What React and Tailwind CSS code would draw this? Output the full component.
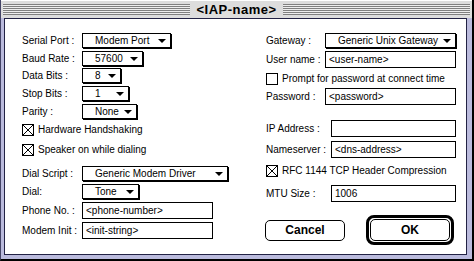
import React from 'react'

const stripes =
  'h-[11px] flex-1 bg-[repeating-linear-gradient(to_bottom,#808080_0px,#808080_1px,#eeeeee_1px,#eeeeee_2px)]'

function Arrow() {
  return (
    <svg width="8" height="4" viewBox="0 0 8 4" className="shrink-0">
      <polygon points="0,0 8,0 4,4" fill="#000" />
    </svg>
  )
}

function Popup({ w, text }) {
  return (
    <div className={`flex h-[15px] items-center justify-between border border-black bg-white pl-[12px] pr-[4px] shadow-[1px_1px_0_#000] ${w}`}>
      <span className="leading-none">{text}</span>
      <Arrow />
    </div>
  )
}

function Field({ w, text }) {
  return (
    <div className={`flex h-[17px] items-center border border-black bg-white pl-[3px] ${w}`}>
      <span className="leading-none">{text}</span>
    </div>
  )
}

function Check({ label, checked, className = '' }) {
  return (
    <div className={`flex h-[12px] items-center gap-[4px] ${className}`}>
      <svg width="12" height="12" viewBox="0 0 12 12" className="shrink-0">
        <rect x="0.5" y="0.5" width="11" height="11" fill="#fff" stroke="#000" />
        {checked && (
          <path d="M1 1L11 11M11 1L1 11" stroke="#000" strokeWidth="1" />
        )}
      </svg>
      <span className="leading-none">{label}</span>
    </div>
  )
}

function Row({ label, lw, className = '', children }) {
  return (
    <div className={`flex items-center ${className}`}>
      <span className={`shrink-0 leading-none ${lw}`}>{label}</span>
      {children}
    </div>
  )
}

export default function App() {
  return (
    <div className="flex h-[261px] w-[474px] flex-col border-b-2 border-l border-r-2 border-b-black border-l-[#444466] border-r-black bg-[#bbbbdd] font-['Liberation_Sans',Arial,sans-serif] text-[10px] text-black">
      {/* title bar */}
      <div className="flex h-[18px] items-start border-t border-t-white bg-[#dddddd] px-[2px] pt-[3px]">
        <div className={stripes} />
        <span className="px-[6px] text-[13px] font-bold leading-[11px] tracking-[0.5px]">&lt;IAP-name&gt;</span>
        <div className={stripes} />
      </div>

      <div className="mb-[4px] ml-[3px] mr-[5px] flex flex-1 border border-[#222244] bg-white">
        {/* left column */}
        <div className="flex w-[261px] flex-col pl-[17px] pt-[14px]">
          <Row label="Serial Port :" lw="w-[60px]">
            <Popup w="w-[89px]" text="Modem Port" />
          </Row>
          <Row label="Baud Rate :" lw="w-[60px]" className="mt-[3px]">
            <Popup w="w-[61px]" text="57600" />
          </Row>
          <Row label="Data Bits :" lw="w-[60px]" className="mt-[2px]">
            <Popup w="w-[39px]" text="8" />
          </Row>
          <Row label="Stop Bits :" lw="w-[60px]" className="mt-[3px]">
            <Popup w="w-[47px]" text="1" />
          </Row>
          <Row label="Parity :" lw="w-[60px]" className="mt-[3px]">
            <Popup w="w-[55px]" text="None" />
          </Row>
          <Check label="Hardware Handshaking" checked className="mt-[5px]" />
          <Check label="Speaker on while dialing" checked className="mt-[8px]" />
          <Row label="Dial Script :" lw="w-[60px]" className="mt-[10px]">
            <Popup w="w-[146px]" text="Generic Modem Driver" />
          </Row>
          <Row label="Dial:" lw="w-[60px]" className="mt-[3px]">
            <Popup w="w-[57px]" text="Tone" />
          </Row>
          <Row label="Phone No. :" lw="w-[60px]" className="mt-[3px]">
            <Field w="w-[131px]" text="<phone-number>" />
          </Row>
          <Row label="Modem Init :" lw="w-[60px]" className="mt-[3px]">
            <Field w="w-[131px]" text="<init-string>" />
          </Row>
        </div>

        {/* right column */}
        <div className="flex flex-1 flex-col pt-[14px]">
          <Row label="Gateway :" lw="w-[59px]">
            <Popup w="w-[131px]" text="Generic Unix Gateway" />
          </Row>
          <Row label="User name :" lw="w-[59px]" className="mt-[3px]">
            <Field w="w-[131px]" text="<user-name>" />
          </Row>
          <Check label="Prompt for password at connect time" className="mt-[5px]" />
          <Row label="Password :" lw="w-[59px]" className="mt-[3px]">
            <Field w="w-[131px]" text="<password>" />
          </Row>
          <Row label="IP Address :" lw="w-[65px]" className="mt-[15px]">
            <Field w="w-[125px]" text="" />
          </Row>
          <Row label="Nameserver :" lw="w-[65px]" className="mt-[4px]">
            <Field w="w-[125px]" text="<dns-address>" />
          </Row>
          <Check label="RFC 1144 TCP Header Compression" checked className="mt-[7px]" />
          <Row label="MTU Size :" lw="w-[65px]" className="mt-[8px]">
            <Field w="w-[125px]" text="1006" />
          </Row>

          <div className="-ml-[1px] mt-[13px] flex items-center gap-[21px]">
            <button className="flex h-[21px] w-[80px] items-center justify-center rounded-[5px] border border-black bg-white text-[12px] font-bold leading-none">
              Cancel
            </button>
            <div className="rounded-[8px] border-[3px] border-black bg-white p-[1px]">
              <button className="flex h-[22px] w-[80px] items-center justify-center rounded-[5px] border border-black bg-white text-[12px] font-bold leading-none">
                OK
              </button>
            </div>
          </div>
        </div>
      </div>
    </div>
  )
}
